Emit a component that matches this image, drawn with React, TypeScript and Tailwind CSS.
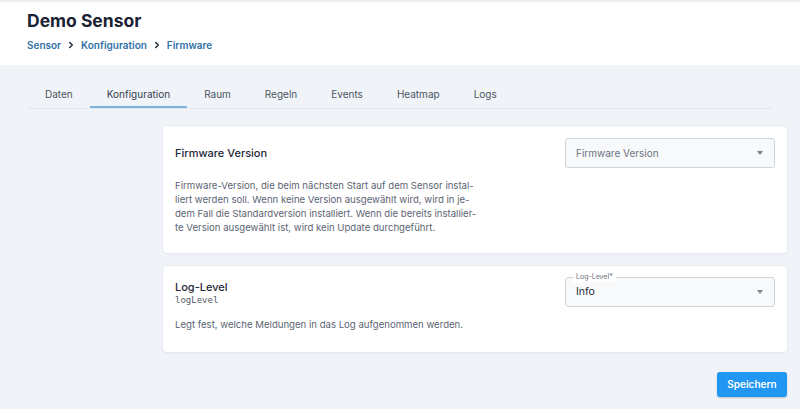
import { ChevronRight } from "lucide-react";

const tabs = ["Daten", "Konfiguration", "Raum", "Regeln", "Events", "Heatmap", "Logs"];

const Caret = () => (
  <svg width="6" height="4" viewBox="0 0 6 4" className="shrink-0">
    <path d="M0 0h6L3 4z" fill="#7b8391" />
  </svg>
);

const App = () => {
  return (
    <div className="min-h-[409px] w-[800px] bg-[#f0f3f7] font-['Inter',sans-serif] text-[#1f2937]">
      <header className="h-[65px] border-t-2 border-[#eceef1] bg-white px-[27px] pt-[8px]">
        <h1 className="text-[17.5px] font-bold leading-[22px] text-[#1a2233]">Demo Sensor</h1>
        <nav className="mt-[6px] flex items-center gap-[5px] text-[10px] font-semibold leading-[14px] text-[#2f72a8]">
          <span>Sensor</span>
          <ChevronRight size={10} strokeWidth={3.5} className="text-[#1f2937]" />
          <span>Konfiguration</span>
          <ChevronRight size={10} strokeWidth={3.5} className="text-[#1f2937]" />
          <span>Firmware</span>
        </nav>
      </header>

      <div className="mx-[28px] mt-[14px] flex border-b border-[#e3e7ec]">
        {tabs.map((t) => (
          <div
            key={t}
            className={
              t === "Konfiguration"
                ? "border-b-2 border-[#7fb3df] px-[17px] pb-[5px] pt-[8px] text-[10px] leading-[14px] text-[#374151]"
                : "border-b-2 border-transparent px-[17px] pb-[5px] pt-[8px] text-[10px] leading-[14px] text-[#4b5563]"
            }
          >
            {t}
          </div>
        ))}
      </div>

      <main className="ml-[163px] mr-[13px] mt-[17px] flex flex-col gap-[13px]">
        <section className="rounded-[4px] bg-white px-[12px] pb-[18px] pt-[12px] shadow-[0_1px_2px_rgba(15,23,42,0.08)] ring-1 ring-[#e7ebf0]">
          <div className="flex items-center justify-between">
            <h2 className="text-[11px] font-medium text-[#1f2937]">Firmware Version</h2>
            <div className="flex h-[30px] w-[210px] items-center justify-between rounded-[3px] border border-[#cfd5dc] bg-[#f8f9fb] pl-[10px] pr-[11px]">
              <span className="text-[10px] text-[#6b7280]">Firmware Version</span>
              <Caret />
            </div>
          </div>
          <p className="mt-[11px] text-[9.6px] leading-[14px] text-[#5b6472]">
            Firmware-Version, die beim nächsten Start auf dem Sensor instal-
            <br />
            liert werden soll. Wenn keine Version ausgewählt wird, wird in je-
            <br />
            dem Fall die Standardversion installiert. Wenn die bereits installier-
            <br />
            te Version ausgewählt ist, wird kein Update durchgeführt.
          </p>
        </section>

        <section className="rounded-[4px] bg-white px-[12px] pb-[20px] pt-[11px] shadow-[0_1px_2px_rgba(15,23,42,0.08)] ring-1 ring-[#e7ebf0]">
          <div className="flex items-center justify-between">
            <div className="pt-[2px]">
              <h2 className="text-[11px] font-medium leading-[13px] text-[#1f2937]">Log-Level</h2>
              <code className="block font-['DejaVu_Sans_Mono',monospace] text-[9px] leading-[12px] text-[#555b66]">logLevel</code>
            </div>
            <div className="relative flex h-[30px] w-[210px] items-center justify-between rounded-[3px] border border-[#cfd5dc] bg-[#f8f9fb] pl-[10px] pr-[11px]">
              <span className="absolute left-[7px] top-[-6px] bg-white px-[3px] text-[7px] leading-[10px] text-[#6b7280]">Log-Level*</span>
              <span className="text-[10.5px] text-[#1f2937]">Info</span>
              <Caret />
            </div>
          </div>
          <p className="mt-[11px] text-[9.6px] leading-[14px] text-[#5b6472]">
            Legt fest, welche Meldungen in das Log aufgenommen werden.
          </p>
        </section>

        <div className="mt-[7px] flex justify-end">
          <button className="h-[25px] w-[70px] rounded-[3px] bg-[#2196f3] text-[10px] font-semibold text-white shadow-[0_1px_2px_rgba(0,0,0,0.2)]">
            Speichern
          </button>
        </div>
      </main>
    </div>
  );
};

export default App;
